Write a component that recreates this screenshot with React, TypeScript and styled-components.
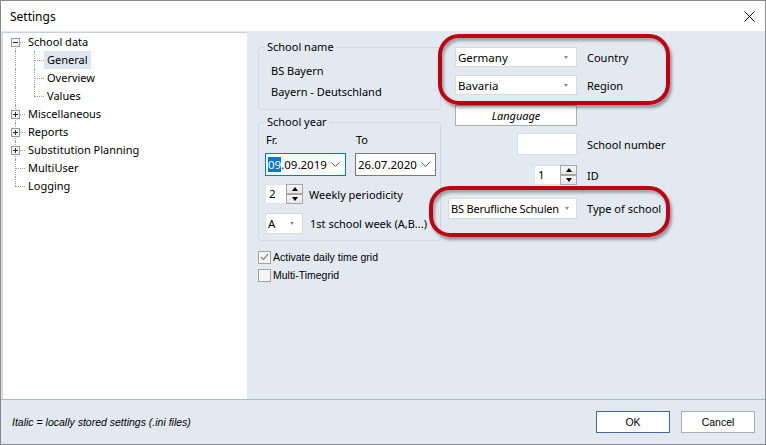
import React from 'react';
import styled, { createGlobalStyle } from 'styled-components';

const GlobalStyle = createGlobalStyle`
  html, body {
    margin: 0;
    padding: 0;
  }
  body {
    font-family: "Noto Sans", "Open Sans", sans-serif;
    font-size: 11px;
    color: #000;
  }
  * {
    box-sizing: border-box;
  }
`;

const classicFont = `"Liberation Sans", Arial, sans-serif`;

type TreeItem = {
  label: string;
  level: 0 | 1;
  expander?: 'plus' | 'minus';
  first?: boolean;
  last?: boolean;
  selected?: boolean;
};

const treeItems: TreeItem[] = [
  { label: 'School data', level: 0, expander: 'minus', first: true },
  { label: 'General', level: 1, selected: true },
  { label: 'Overview', level: 1 },
  { label: 'Values', level: 1, last: true },
  { label: 'Miscellaneous', level: 0, expander: 'plus' },
  { label: 'Reports', level: 0, expander: 'plus' },
  { label: 'Substitution Planning', level: 0, expander: 'plus' },
  { label: 'MultiUser', level: 0 },
  { label: 'Logging', level: 0, last: true },
];

const Expander: React.FC<{ kind: 'plus' | 'minus' }> = ({ kind }) => (
  <ExpanderBox width="9" height="9" viewBox="0 0 9 9">
    <rect x="0.5" y="0.5" width="8" height="8" fill="#f7f7f7" stroke="#9a9a9a" />
    <line x1="2" y1="4.5" x2="7" y2="4.5" stroke="#2b2b2b" />
    {kind === 'plus' && <line x1="4.5" y1="2" x2="4.5" y2="7" stroke="#2b2b2b" />}
  </ExpanderBox>
);

const Spin: React.FC<{ value: string; inputWidth: number }> = ({ value, inputWidth }) => (
  <SpinWrap>
    <SpinInput $w={inputWidth}>{value}</SpinInput>
    <SpinButtons>
      <SpinButton>
        <Arrow $up />
      </SpinButton>
      <SpinButton>
        <Arrow />
      </SpinButton>
    </SpinButtons>
  </SpinWrap>
);

const Chevron = () => (
  <svg width="9" height="5" viewBox="0 0 9 5">
    <polyline points="0.5,0.5 4.5,4.5 8.5,0.5" fill="none" stroke="#606060" />
  </svg>
);

export default function App() {
  return (
    <>
      <GlobalStyle />
      <Window>
        <TitleBar>
          <Title>Settings</Title>
          <svg width="11" height="11" viewBox="0 0 11 11">
            <line x1="0.5" y1="0.5" x2="10.5" y2="10.5" stroke="#000" />
            <line x1="10.5" y1="0.5" x2="0.5" y2="10.5" stroke="#000" />
          </svg>
        </TitleBar>

        <Body>
          <Tree>
            {treeItems.map((item) => (
              <TreeRow key={item.label}>
                {item.level === 0 ? (
                  <Gutter $w={22} $x={12} $up={!item.first} $down={!item.last} $h>
                    {item.expander && <Expander kind={item.expander} />}
                  </Gutter>
                ) : (
                  <>
                    <Gutter $w={22} $x={12} $up $down />
                    <Gutter $w={19} $x={9} $up $down={!item.last} $h />
                  </>
                )}
                <TreeLabel $selected={item.selected}>{item.label}</TreeLabel>
              </TreeRow>
            ))}
          </Tree>

          <Content>
            <LeftColumn>
              <Group>
                <Legend>School name</Legend>
                <NameLines>
                  <Line>BS Bayern</Line>
                  <Line>Bayern - Deutschland</Line>
                </NameLines>
              </Group>

              <Group $mt={5}>
                <Legend>School year</Legend>
                <YearBody>
                  <DateRow>
                    <DateField>
                      <SmallLabel>Fr.</SmallLabel>
                      <DateBox $focused>
                        <span>
                          <Selection>09</Selection>.09.2019
                        </span>
                        <Chevron />
                      </DateBox>
                    </DateField>
                    <DateField>
                      <SmallLabel>To</SmallLabel>
                      <DateBox>
                        <span>26.07.2020</span>
                        <Chevron />
                      </DateBox>
                    </DateField>
                  </DateRow>

                  <InlineRow $mt={8}>
                    <Spin value="2" inputWidth={21} />
                    <InlineLabel $gap={6}>Weekly periodicity</InlineLabel>
                  </InlineRow>

                  <InlineRow $mt={9}>
                    <Combo $w={38} $h={21}>
                      <ComboText>A</ComboText>
                      <ComboArrow />
                    </Combo>
                    <InlineLabel $gap={7}>1st school week (A,B...)</InlineLabel>
                  </InlineRow>
                </YearBody>
              </Group>

              <CheckRow $mt={7}>
                <CheckBox>
                  <svg width="9" height="8" viewBox="0 0 9 8">
                    <polyline points="1,4 3.5,6.5 8,1" fill="none" stroke="#8c8c8c" strokeWidth="1.4" />
                  </svg>
                </CheckBox>
                <CheckLabel>Activate daily time grid</CheckLabel>
              </CheckRow>
              <CheckRow>
                <CheckBox />
                <CheckLabel>Multi-Timegrid</CheckLabel>
              </CheckRow>
            </LeftColumn>

            <RightColumn>
              <FieldRow>
                <Slot>
                  <Combo $w={122} $h={20}>
                    <ComboText>Germany</ComboText>
                    <ComboArrow />
                  </Combo>
                </Slot>
                <FieldLabel>Country</FieldLabel>
              </FieldRow>
              <FieldRow $mt={8}>
                <Slot>
                  <Combo $w={122} $h={20}>
                    <ComboText>Bavaria</ComboText>
                    <ComboArrow />
                  </Combo>
                </Slot>
                <FieldLabel>Region</FieldLabel>
              </FieldRow>
              <FieldRow $mt={10}>
                <Slot>
                  <LanguageButton>Language</LanguageButton>
                </Slot>
              </FieldRow>
              <FieldRow $mt={7}>
                <Slot>
                  <TextBox $w={60} />
                </Slot>
                <FieldLabel>School number</FieldLabel>
              </FieldRow>
              <FieldRow $mt={10}>
                <Slot>
                  <Spin value="1" inputWidth={26} />
                </Slot>
                <FieldLabel>ID</FieldLabel>
              </FieldRow>
              <FieldRow $mt={13}>
                <Slot>
                  <Combo $w={129} $h={21} $tight>
                    <ComboText $tight>BS Berufliche Schulen</ComboText>
                    <ComboArrow />
                  </Combo>
                </Slot>
                <FieldLabel>Type of school</FieldLabel>
              </FieldRow>
            </RightColumn>
          </Content>
        </Body>

        <Footer>
          <Hint>Italic = locally stored settings (.ini files)</Hint>
          <Buttons>
            <DialogButton $default>OK</DialogButton>
            <DialogButton>Cancel</DialogButton>
          </Buttons>
        </Footer>

        <Highlight style={{ left: 437, top: 33, width: 232, height: 71 }} />
        <Highlight style={{ left: 428, top: 185, width: 241, height: 51 }} />
      </Window>
    </>
  );
}

const Window = styled.div`
  position: relative;
  width: 766px;
  height: 445px;
  border: 1px solid #8a8a8a;
  background: #e3e9f1;
  display: flex;
  flex-direction: column;
  overflow: hidden;
`;

const TitleBar = styled.div`
  height: 30px;
  flex: none;
  background: #fff;
  display: flex;
  align-items: center;
  justify-content: space-between;
  padding: 0 10px 0 9px;
`;

const Title = styled.span`
  font-size: 12px;
`;

const Body = styled.div`
  flex: 1;
  min-height: 0;
  display: flex;
  padding: 1px 0 0 1px;
`;

const Tree = styled.div`
  width: 245px;
  flex: none;
  background: #fff;
  border-top: 1px solid #c8d2df;
  border-left: 1px solid #c8d2df;
`;

const TreeRow = styled.div`
  display: flex;
  align-items: center;
  height: 18px;
`;

const Gutter = styled.span<{ $w: number; $x: number; $up?: boolean; $down?: boolean; $h?: boolean }>`
  position: relative;
  flex: none;
  width: ${(p) => p.$w}px;
  height: 18px;

  &::before {
    content: '';
    display: ${(p) => (p.$up || p.$down ? 'block' : 'none')};
    position: absolute;
    left: ${(p) => p.$x}px;
    top: ${(p) => (p.$up ? 0 : 9)}px;
    bottom: ${(p) => (p.$down ? 0 : 9)}px;
    border-left: 1px dotted #a0a0a0;
  }

  &::after {
    content: '';
    display: ${(p) => (p.$h ? 'block' : 'none')};
    position: absolute;
    left: ${(p) => p.$x}px;
    right: 0;
    top: 9px;
    border-top: 1px dotted #a0a0a0;
  }
`;

const ExpanderBox = styled.svg`
  position: absolute;
  left: 8px;
  top: 5px;
  z-index: 1;
`;

const TreeLabel = styled.span<{ $selected?: boolean }>`
  height: 18px;
  line-height: 18px;
  padding: 0 3px;
  white-space: nowrap;
  background: ${(p) => (p.$selected ? '#dde5ee' : 'transparent')};
`;

const Content = styled.div`
  flex: 1;
  display: flex;
  gap: 7px;
  padding: 8px 0 0 11px;
`;

const LeftColumn = styled.div`
  width: 183px;
  display: flex;
  flex-direction: column;
`;

const Group = styled.fieldset<{ $mt?: number }>`
  margin: ${(p) => p.$mt ?? 0}px 0 0 0;
  padding: 0;
  min-width: 0;
  border: 1px solid #d2d9e2;
  border-radius: 3px;
`;

const Legend = styled.legend`
  margin-left: 6px;
  padding: 0 2px;
  line-height: 14px;
`;

const NameLines = styled.div`
  display: flex;
  flex-direction: column;
  gap: 7px;
  padding: 10px 6px 10px 12px;
`;

const Line = styled.div`
  line-height: 14px;
`;

const YearBody = styled.div`
  padding: 4px 4px 6px 6px;
`;

const DateRow = styled.div`
  display: flex;
  gap: 9px;
`;

const DateField = styled.div`
  display: flex;
  flex-direction: column;
  gap: 6px;
`;

const SmallLabel = styled.span`
  line-height: 14px;
  padding-left: 1px;
`;

const DateBox = styled.div<{ $focused?: boolean }>`
  width: 81px;
  height: 23px;
  background: #fff;
  border: 1px solid ${(p) => (p.$focused ? '#0078d7' : '#7a7a7a')};
  display: flex;
  align-items: center;
  justify-content: space-between;
  padding: 0 5px 0 2px;
  font-size: 11.5px;
`;

const Selection = styled.span`
  background: #0078d7;
  color: #fff;
`;

const InlineRow = styled.div<{ $mt?: number }>`
  display: flex;
  align-items: center;
  margin-top: ${(p) => p.$mt ?? 0}px;
`;

const InlineLabel = styled.span<{ $gap: number }>`
  margin-left: ${(p) => p.$gap}px;
  white-space: nowrap;
`;

const SpinWrap = styled.div`
  display: flex;
  height: 20px;
`;

const SpinInput = styled.div<{ $w: number }>`
  width: ${(p) => p.$w}px;
  height: 20px;
  background: #fff;
  border: 1px solid #e2e2e2;
  border-right: none;
  padding-left: 3px;
  line-height: 18px;
  font-size: 11.5px;
`;

const SpinButtons = styled.div`
  display: flex;
  flex-direction: column;
  justify-content: space-between;
  width: 17px;
  height: 20px;
`;

const SpinButton = styled.div`
  height: 10px;
  border: 1px solid #a6a6a6;
  background: linear-gradient(#f6f6f6, #e6e6e6);
  display: flex;
  align-items: center;
  justify-content: center;
`;

const Arrow = styled.span<{ $up?: boolean }>`
  width: 0;
  height: 0;
  border-left: 3.5px solid transparent;
  border-right: 3.5px solid transparent;
  ${(p) => (p.$up ? 'border-bottom: 4px solid #000;' : 'border-top: 4px solid #000;')}
`;

const Combo = styled.div<{ $w: number; $h: number; $tight?: boolean }>`
  width: ${(p) => p.$w}px;
  height: ${(p) => p.$h}px;
  background: #fff;
  border: 1px solid #dadada;
  display: flex;
  align-items: center;
  padding: ${(p) => (p.$tight ? '0 7px 0 2px' : '0 8px 0 2px')};
  gap: ${(p) => (p.$tight ? 3 : 4)}px;
`;

const ComboText = styled.span<{ $tight?: boolean }>`
  flex: 1;
  white-space: nowrap;
  overflow: hidden;
  font-size: ${(p) => (p.$tight ? '11px' : '11.5px')};
  letter-spacing: ${(p) => (p.$tight ? '-0.2px' : '0')};
`;

const ComboArrow = styled.span`
  flex: none;
  width: 0;
  height: 0;
  border-left: 2.5px solid transparent;
  border-right: 2.5px solid transparent;
  border-top: 3px solid #8a8a8a;
`;

const CheckRow = styled.div<{ $mt?: number }>`
  display: flex;
  align-items: center;
  height: 18px;
  margin-top: ${(p) => p.$mt ?? 0}px;
`;

const CheckBox = styled.span`
  width: 13px;
  height: 13px;
  border: 1px solid #a3a3a3;
  background: #f6f6f6;
  display: flex;
  align-items: center;
  justify-content: center;
`;

const CheckLabel = styled.span`
  margin-left: 2px;
  font-family: ${classicFont};
  font-size: 10.5px;
`;

const RightColumn = styled.div`
  display: flex;
  flex-direction: column;
  padding-top: 7px;
`;

const FieldRow = styled.div<{ $mt?: number }>`
  display: flex;
  align-items: center;
  margin-top: ${(p) => p.$mt ?? 0}px;
`;

const Slot = styled.div`
  width: 129px;
  display: flex;
  justify-content: flex-end;
`;

const FieldLabel = styled.span`
  margin-left: 10px;
  white-space: nowrap;
`;

const LanguageButton = styled.div`
  width: 122px;
  height: 21px;
  background: #fff;
  border: 1px solid #adadad;
  font-style: italic;
  display: flex;
  align-items: center;
  justify-content: center;
`;

const TextBox = styled.div<{ $w: number }>`
  width: ${(p) => p.$w}px;
  height: 22px;
  background: #fff;
  border: 1px solid #dcdcdc;
`;

const Footer = styled.div`
  height: 45px;
  flex: none;
  border-top: 1px solid #a8bbd6;
  display: flex;
  align-items: center;
  padding: 0 10px 0 11px;
`;

const Hint = styled.span`
  font-family: ${classicFont};
  font-style: italic;
  font-size: 10.5px;
`;

const Buttons = styled.div`
  margin-left: auto;
  display: flex;
  gap: 11px;
`;

const DialogButton = styled.div<{ $default?: boolean }>`
  width: 74px;
  height: 22px;
  background: #fff;
  border: 1px solid ${(p) => (p.$default ? '#44679e' : '#adadad')};
  display: flex;
  align-items: center;
  justify-content: center;
  font-family: ${classicFont};
  font-size: 10.5px;
`;

const Highlight = styled.div`
  position: absolute;
  border: 4px solid #bf0010;
  border-radius: 21px;
  box-shadow: 2px 3px 3px rgba(0, 0, 0, 0.35), inset 2px 3px 3px rgba(0, 0, 0, 0.3);
  pointer-events: none;
`;
